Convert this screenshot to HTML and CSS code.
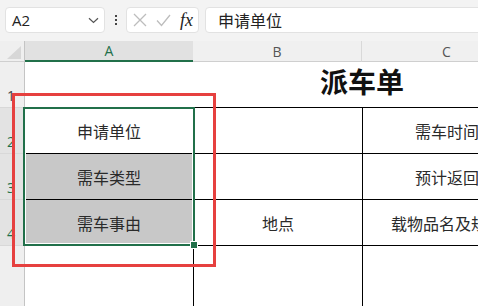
FILE: index.html
```html
<!DOCTYPE html>
<html lang="zh-CN">
<head>
    <meta charset="UTF-8">
    <meta name="viewport" content="width=device-width, initial-scale=1.0">
    <title>派车单</title>
    <link rel="stylesheet" href="styles.css">
</head>
<body>
    <div class="toolbar">
        <div class="name-box">
            <span class="name-text">A2</span>
            <svg class="chevron" width="11" height="7" viewBox="0 0 11 7">
                <path d="M1 1.2 L5.5 5.5 L10 1.2" fill="none" stroke="#555" stroke-width="1.2"/>
            </svg>
        </div>
        <div class="dots"><span></span><span></span><span></span></div>
        <div class="fx-group">
            <svg width="14" height="14" viewBox="0 0 14 14">
                <path d="M1 1 L13 13 M13 1 L1 13" stroke="#bdbdbd" stroke-width="1.3" fill="none"/>
            </svg>
            <svg width="15" height="13" viewBox="0 0 15 13">
                <path d="M1 6.5 L5.5 11.5 L14 1" stroke="#bdbdbd" stroke-width="1.3" fill="none"/>
            </svg>
            <span class="fx">fx</span>
        </div>
        <div class="formula">申请单位</div>
    </div>

    <div class="sheet">
        <div class="corner">
            <svg width="14" height="13" viewBox="0 0 14 13"><path d="M14 0 L14 13 L0 13 Z" fill="#d7d7d7"/></svg>
        </div>
        <div class="col-head active">A</div>
        <div class="col-head sep">B</div>
        <div class="col-head">C</div>

        <div class="row-head first">1</div>
        <div class="cell"></div>
        <div class="cell title">派车单</div>

        <div class="row-head active">2</div>
        <div class="cell line-top">申请单位</div>
        <div class="cell line-top line-left"></div>
        <div class="cell line-top line-left">需车时间</div>

        <div class="row-head active">3</div>
        <div class="cell line-top grey">需车类型</div>
        <div class="cell line-top line-left"></div>
        <div class="cell line-top line-left">预计返回</div>

        <div class="row-head active">4</div>
        <div class="cell line-top grey">需车事由</div>
        <div class="cell line-top line-left">地点</div>
        <div class="cell line-top line-left">载物品名及规格</div>

        <div class="row-head"></div>
        <div class="cell line-top"></div>
        <div class="cell line-top line-left"></div>
        <div class="cell line-top line-left"></div>

        <div class="selection"></div>
        <div class="fill-handle"></div>
        <div class="highlight"></div>
    </div>
</body>
</html>
```

FILE: styles.css
```css
body {
    margin: 0;
    width: 478px;
    height: 306px;
    overflow: hidden;
    background: #fff;
    font-family: "Noto Sans CJK SC", "Noto Sans", sans-serif;
    color: #222;
}
.toolbar {
    display: flex;
    align-items: center;
    height: 41px;
    padding: 0 0 1px 5px;
    box-sizing: border-box;
    background: #f3f3f3;
}
.name-box {
    display: flex;
    align-items: center;
    justify-content: space-between;
    width: 100px;
    height: 26px;
    padding: 0 5px 0 6px;
    box-sizing: border-box;
    background: #fff;
    border: 1px solid #e2e2e2;
    border-radius: 4px;
}
.name-text {
    font-family: "Open Sans", sans-serif;
    font-size: 15px;
    color: #222;
}
.dots {
    display: flex;
    flex-direction: column;
    gap: 2px;
    width: 21px;
    align-items: center;
}
.dots span {
    width: 2px;
    height: 2px;
    background: #444;
}
.fx-group {
    display: flex;
    align-items: center;
    gap: 9px;
    width: 73px;
    height: 26px;
    padding-left: 6px;
    box-sizing: border-box;
    background: #fff;
    border: 1px solid #e2e2e2;
    border-radius: 4px;
}
.fx {
    font-family: "Liberation Serif", serif;
    font-style: italic;
    font-size: 18px;
    color: #222;
}
.formula {
    flex: 1;
    height: 26px;
    margin-left: 6px;
    margin-right: -8px;
    padding-left: 12px;
    box-sizing: border-box;
    background: #fff;
    border: 1px solid #e2e2e2;
    border-radius: 4px;
    font-size: 16px;
    line-height: 24px;
    color: #222;
}
.sheet {
    position: relative;
    display: grid;
    grid-template-columns: 25px 168px 169px 169px;
    grid-template-rows: 21px 45px 46px 46px 46px 70px;
}
.corner {
    display: flex;
    align-items: flex-end;
    padding: 0 0 2px 7px;
    background: #efefef;
    border-right: 1px solid #c4c4c4;
    border-bottom: 1px solid #cfcfcf;
}
.col-head {
    display: flex;
    align-items: center;
    justify-content: center;
    background: #f0f0f0;
    border-bottom: 1px solid #cfcfcf;
    font-family: "Open Sans", sans-serif;
    font-size: 14px;
    color: #555;
}
.col-head.active {
    background: #e1e1e1;
    border-bottom: 2px solid #21704a;
    color: #21704a;
}
.col-head.sep {
    border-right: 1px solid #d9d9d9;
}
.row-head {
    display: flex;
    align-items: flex-end;
    padding: 0 0 2px 7px;
    background: #efefef;
    border-right: 1px solid #c4c4c4;
    border-top: 1px solid #d8d8d8;
    font-family: "Open Sans", sans-serif;
    font-size: 14px;
    color: #444;
}
.row-head.first {
    border-top: none;
}
.row-head.active {
    background: #e3e3e3;
    color: #21704a;
}
.cell {
    display: flex;
    align-items: center;
    justify-content: center;
    font-size: 16px;
    color: #2a2a2a;
    white-space: nowrap;
    overflow: hidden;
}
.cell.title {
    grid-column: 3 / span 2;
    align-items: flex-end;
    padding-bottom: 6px;
    font-size: 28px;
    font-weight: bold;
    color: #111;
}
.line-top {
    border-top: 1px solid #000;
}
.line-left {
    border-left: 1px solid #000;
}
.grey {
    background: #c8c8c8;
}
.selection {
    position: absolute;
    left: 23px;
    top: 66px;
    width: 172px;
    height: 139px;
    box-sizing: border-box;
    border: 2px solid #21704a;
    box-shadow: inset 0 0 0 1px #fff;
}
.fill-handle {
    position: absolute;
    left: 191px;
    top: 201px;
    width: 6px;
    height: 6px;
    background: #21704a;
    box-shadow: 0 0 0 1px #fff;
}
.highlight {
    position: absolute;
    left: 12px;
    top: 52px;
    width: 204px;
    height: 174px;
    box-sizing: border-box;
    border: 3px solid #e6403f;
}
```
